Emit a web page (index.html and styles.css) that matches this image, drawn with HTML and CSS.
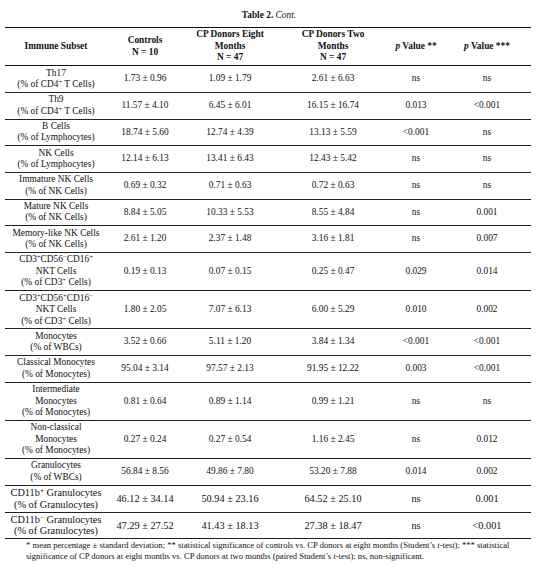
FILE: index.html
```html
<!DOCTYPE html>
<html lang="en">
<head>
    <meta charset="utf-8">
    <title>Table 2. Cont.</title>
    <link rel="stylesheet" href="styles.css">
</head>
<body>
    <div class="page">
        <p class="caption"><b>Table 2.</b> <i>Cont.</i></p>
        <table class="data">
            <colgroup>
                <col class="c-subset">
                <col class="c-ctrl">
                <col class="c-eight">
                <col class="c-two">
                <col class="c-p2">
                <col class="c-p3">
            </colgroup>
            <thead>
                <tr>
                    <th>Immune Subset</th>
                    <th>Controls<br>N = 10</th>
                    <th>CP Donors Eight<br>Months<br>N = 47</th>
                    <th>CP Donors Two<br>Months<br>N = 47</th>
                    <th><i>p</i> Value **</th>
                    <th><i>p</i> Value ***</th>
                </tr>
            </thead>
            <tbody>
                <tr>
                    <td>Th17<br>(% of CD4<sup>+</sup> T Cells)</td>
                    <td>1.73 ± 0.96</td><td>1.09 ± 1.79</td><td>2.61 ± 6.63</td><td>ns</td><td>ns</td>
                </tr>
                <tr>
                    <td>Th9<br>(% of CD4<sup>+</sup> T Cells)</td>
                    <td>11.57 ± 4.10</td><td>6.45 ± 6.01</td><td>16.15 ± 16.74</td><td>0.013</td><td>&lt;0.001</td>
                </tr>
                <tr>
                    <td>B Cells<br>(% of Lymphocytes)</td>
                    <td>18.74 ± 5.60</td><td>12.74 ± 4.39</td><td>13.13 ± 5.59</td><td>&lt;0.001</td><td>ns</td>
                </tr>
                <tr>
                    <td>NK Cells<br>(% of Lymphocytes)</td>
                    <td>12.14 ± 6.13</td><td>13.41 ± 6.43</td><td>12.43 ± 5.42</td><td>ns</td><td>ns</td>
                </tr>
                <tr>
                    <td>Immature NK Cells<br>(% of NK Cells)</td>
                    <td>0.69 ± 0.32</td><td>0.71 ± 0.63</td><td>0.72 ± 0.63</td><td>ns</td><td>ns</td>
                </tr>
                <tr>
                    <td>Mature NK Cells<br>(% of NK Cells)</td>
                    <td>8.84 ± 5.05</td><td>10.33 ± 5.53</td><td>8.55 ± 4.84</td><td>ns</td><td>0.001</td>
                </tr>
                <tr>
                    <td>Memory-like NK Cells<br>(% of NK Cells)</td>
                    <td>2.61 ± 1.20</td><td>2.37 ± 1.48</td><td>3.16 ± 1.81</td><td>ns</td><td>0.007</td>
                </tr>
                <tr>
                    <td>CD3<sup>+</sup>CD56<sup>−</sup>CD16<sup>+</sup><br>NKT Cells<br>(% of CD3<sup>+</sup> Cells)</td>
                    <td>0.19 ± 0.13</td><td>0.07 ± 0.15</td><td>0.25 ± 0.47</td><td>0.029</td><td>0.014</td>
                </tr>
                <tr>
                    <td>CD3<sup>+</sup>CD56<sup>+</sup>CD16<sup>−</sup><br>NKT Cells<br>(% of CD3<sup>+</sup> Cells)</td>
                    <td>1.80 ± 2.05</td><td>7.07 ± 6.13</td><td>6.00 ± 5.29</td><td>0.010</td><td>0.002</td>
                </tr>
                <tr>
                    <td>Monocytes<br>(% of WBCs)</td>
                    <td>3.52 ± 0.66</td><td>5.11 ± 1.20</td><td>3.84 ± 1.34</td><td>&lt;0.001</td><td>&lt;0.001</td>
                </tr>
                <tr>
                    <td>Classical Monocytes<br>(% of Monocytes)</td>
                    <td>95.04 ± 3.14</td><td>97.57 ± 2.13</td><td>91.95 ± 12.22</td><td>0.003</td><td>&lt;0.001</td>
                </tr>
                <tr>
                    <td>Intermediate<br>Monocytes<br>(% of Monocytes)</td>
                    <td>0.81 ± 0.64</td><td>0.89 ± 1.14</td><td>0.99 ± 1.21</td><td>ns</td><td>ns</td>
                </tr>
                <tr>
                    <td>Non-classical<br>Monocytes<br>(% of Monocytes)</td>
                    <td>0.27 ± 0.24</td><td>0.27 ± 0.54</td><td>1.16 ± 2.45</td><td>ns</td><td>0.012</td>
                </tr>
                <tr>
                    <td>Granulocytes<br>(% of WBCs)</td>
                    <td>56.84 ± 8.56</td><td>49.86 ± 7.80</td><td>53.20 ± 7.88</td><td>0.014</td><td>0.002</td>
                </tr>
                <tr class="big">
                    <td>CD11b<sup>+</sup> Granulocytes<br>(% of Granulocytes)</td>
                    <td>46.12 ± 34.14</td><td>50.94 ± 23.16</td><td>64.52 ± 25.10</td><td>ns</td><td>0.001</td>
                </tr>
                <tr class="big">
                    <td>CD11b<sup>−</sup> Granulocytes<br>(% of Granulocytes)</td>
                    <td>47.29 ± 27.52</td><td>41.43 ± 18.13</td><td>27.38 ± 18.47</td><td>ns</td><td>&lt;0.001</td>
                </tr>
            </tbody>
        </table>
        <p class="note">* mean percentage ± standard deviation; ** statistical significance of controls vs. CP donors at eight months (Student’s <i>t</i>-test); *** statistical<br>significance of CP donors at eight months vs. CP donors at two months (paired Student’s <i>t</i>-test); ns, non-significant.</p>
    </div>
</body>
</html>
```

FILE: styles.css
```css
body {
    margin: 0;
    background: #fff;
    color: #111;
    font-family: "Liberation Serif", "Times New Roman", serif;
}
.page {
    padding: 0 5px;
}
.caption {
    text-align: center;
    font-size: 9.4px;
    line-height: 11px;
    margin: 10px 0 6px;
}
.data {
    width: 526px;
    border-collapse: collapse;
    table-layout: fixed;
    font-size: 9.4px;
}
.c-subset { width: 102px; }
.c-ctrl { width: 76px; }
.c-eight { width: 94px; }
.c-two { width: 112px; }
.c-p2 { width: 54px; }
.c-p3 { width: 88px; }

.data th,
.data td {
    text-align: center;
    vertical-align: middle;
    padding: 1.35px 2px;
    line-height: 11.5px;
    white-space: nowrap;
}
.data th {
    font-weight: bold;
    border-top: 1px solid #111;
    border-bottom: 1px solid #111;
}
.data td {
    border-bottom: 1px solid #222;
}
.data .big td {
    font-size: 10.3px;
}
sup {
    font-size: 70%;
    line-height: 0;
    vertical-align: 0.45em;
}
.note {
    margin: 1px 0 0;
    padding-left: 21px;
    font-size: 8.6px;
    line-height: 11px;
}
```
